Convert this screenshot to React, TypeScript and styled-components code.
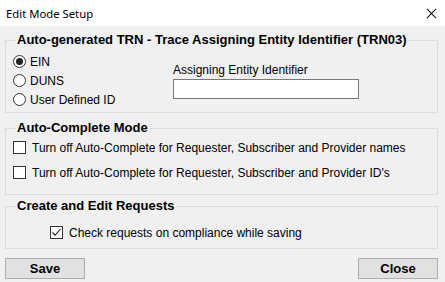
import React, { useState } from "react";
import styled, { createGlobalStyle } from "styled-components";

const GlobalStyle = createGlobalStyle`
  html, body {
    margin: 0;
    padding: 0;
    background: #f0f0f0;
  }
  * {
    box-sizing: border-box;
  }
`;

export default function App() {
  const [mode, setMode] = useState("ein");
  const [names, setNames] = useState(false);
  const [ids, setIds] = useState(false);
  const [compliance, setCompliance] = useState(true);

  return (
    <>
      <GlobalStyle />
      <Window>
        <TitleBar>
          <Title>Edit Mode Setup</Title>
          <CloseIcon viewBox="0 0 12 12">
            <path d="M1 1 L11 11 M11 1 L1 11" stroke="#111" strokeWidth="1.1" fill="none" />
          </CloseIcon>
        </TitleBar>
        <Body>
          <Group $height={81} $gap={7}>
            <Legend>Auto-generated TRN - Trace Assigning Entity Identifier (TRN03)</Legend>
            <TrnRow>
              <RadioList>
                {[
                  ["ein", "EIN"],
                  ["duns", "DUNS"],
                  ["user", "User Defined ID"],
                ].map(([key, label]) => (
                  <RadioRow key={key} onClick={() => setMode(key)}>
                    <Radio $on={mode === key} />
                    <Label>{label}</Label>
                  </RadioRow>
                ))}
              </RadioList>
              <Field>
                <Label>Assigning Entity Identifier</Label>
                <TextInput />
              </Field>
            </TrnRow>
          </Group>

          <Group $height={75} $gap={3}>
            <Legend>Auto-Complete Mode</Legend>
            <CheckList>
              <CheckRow onClick={() => setNames(!names)}>
                <Box $on={names} />
                <Label>Turn off Auto-Complete for Requester, Subscriber and Provider names</Label>
              </CheckRow>
              <CheckRow onClick={() => setIds(!ids)}>
                <Box $on={ids} />
                <Label>Turn off Auto-Complete for Requester, Subscriber and Provider ID's</Label>
              </CheckRow>
            </CheckList>
          </Group>

          <Group $height={51} $gap={9}>
            <Legend>Create and Edit Requests</Legend>
            <IndentRow onClick={() => setCompliance(!compliance)}>
              <Box $on={compliance} />
              <Label>Check requests on compliance while saving</Label>
            </IndentRow>
          </Group>

          <ButtonBar>
            <Button>Save</Button>
            <Button>Close</Button>
          </ButtonBar>
        </Body>
      </Window>
    </>
  );
}

function Box({ $on }: { $on: boolean }) {
  return (
    <CheckBox>
      {$on && (
        <svg width="11" height="11" viewBox="0 0 11 11">
          <path d="M1.5 5.5 L4.2 8.2 L9.5 2" fill="none" stroke="#222" strokeWidth="1.1" />
        </svg>
      )}
    </CheckBox>
  );
}

const Window = styled.div`
  width: 445px;
  height: 282px;
  background: #f0f0f0;
  display: flex;
  flex-direction: column;
  font-family: "Liberation Sans", Arial, sans-serif;
  color: #000;
  overflow: hidden;
`;

const TitleBar = styled.div`
  flex-shrink: 0;
  height: 26px;
  background: #fff;
  display: flex;
  align-items: center;
  justify-content: space-between;
  padding: 0 8px 0 6px;
`;

const Title = styled.div`
  font-family: "Noto Sans", "Open Sans", sans-serif;
  font-size: 11.3px;
  color: #000;
`;

const CloseIcon = styled.svg`
  display: block;
  flex-shrink: 0;
  width: 11px;
  height: 11px;
`;

const Body = styled.div`
  display: flex;
  flex-direction: column;
  padding: 6px 7px 0 5px;
`;

const Group = styled.fieldset<{ $height: number; $gap: number }>`
  flex-shrink: 0;
  margin: 0 0 ${(p) => p.$gap}px;
  padding: 0 0 0 7px;
  border: 1px solid #dcdcdc;
  height: ${(p) => p.$height}px;
  min-width: 0;
`;

const Legend = styled.legend`
  font-weight: bold;
  font-size: 13px;
  padding: 0 1px;
  margin-left: 3px;
  line-height: 16px;
`;

const TrnRow = styled.div`
  display: flex;
  align-items: flex-start;
  margin-top: 7px;
`;

const RadioList = styled.div`
  display: flex;
  flex-direction: column;
  gap: 6px;
  width: 160px;
`;

const RadioRow = styled.div`
  display: flex;
  align-items: center;
  gap: 4px;
  height: 13px;
  cursor: default;
`;

const Radio = styled.span<{ $on: boolean }>`
  width: 13px;
  height: 13px;
  border-radius: 50%;
  border: 1px solid #333;
  background: #fff;
  display: flex;
  align-items: center;
  justify-content: center;
  &::after {
    content: "";
    width: 7px;
    height: 7px;
    border-radius: 50%;
    background: ${(p) => (p.$on ? "#222" : "transparent")};
  }
`;

const Label = styled.span`
  font-size: 12px;
  line-height: 14px;
  white-space: nowrap;
`;

const Field = styled.div`
  display: flex;
  flex-direction: column;
  gap: 2px;
  margin-top: 8px;
`;

const TextInput = styled.input`
  width: 186px;
  height: 20px;
  border: 1px solid #7a7a7a;
  background: #fff;
  margin: 0;
  padding: 0 3px;
  outline: none;
`;

const CheckList = styled.div`
  display: flex;
  flex-direction: column;
  gap: 12px;
  margin-top: 5px;
`;

const CheckRow = styled.div`
  display: flex;
  align-items: center;
  gap: 6px;
  height: 13px;
  cursor: default;
`;

const IndentRow = styled(CheckRow)`
  margin: 12px 0 0 37px;
`;

const CheckBox = styled.span`
  width: 13px;
  height: 13px;
  border: 1px solid #333;
  background: #fff;
  display: flex;
  align-items: center;
  justify-content: center;
`;

const ButtonBar = styled.div`
  flex-shrink: 0;
  display: flex;
  justify-content: space-between;
`;

const Button = styled.button`
  width: 80px;
  height: 21px;
  border: 1px solid #adadad;
  background: #e1e1e1;
  font-family: "Liberation Sans", Arial, sans-serif;
  font-weight: bold;
  font-size: 13px;
  padding: 0;
  color: #000;
`;
